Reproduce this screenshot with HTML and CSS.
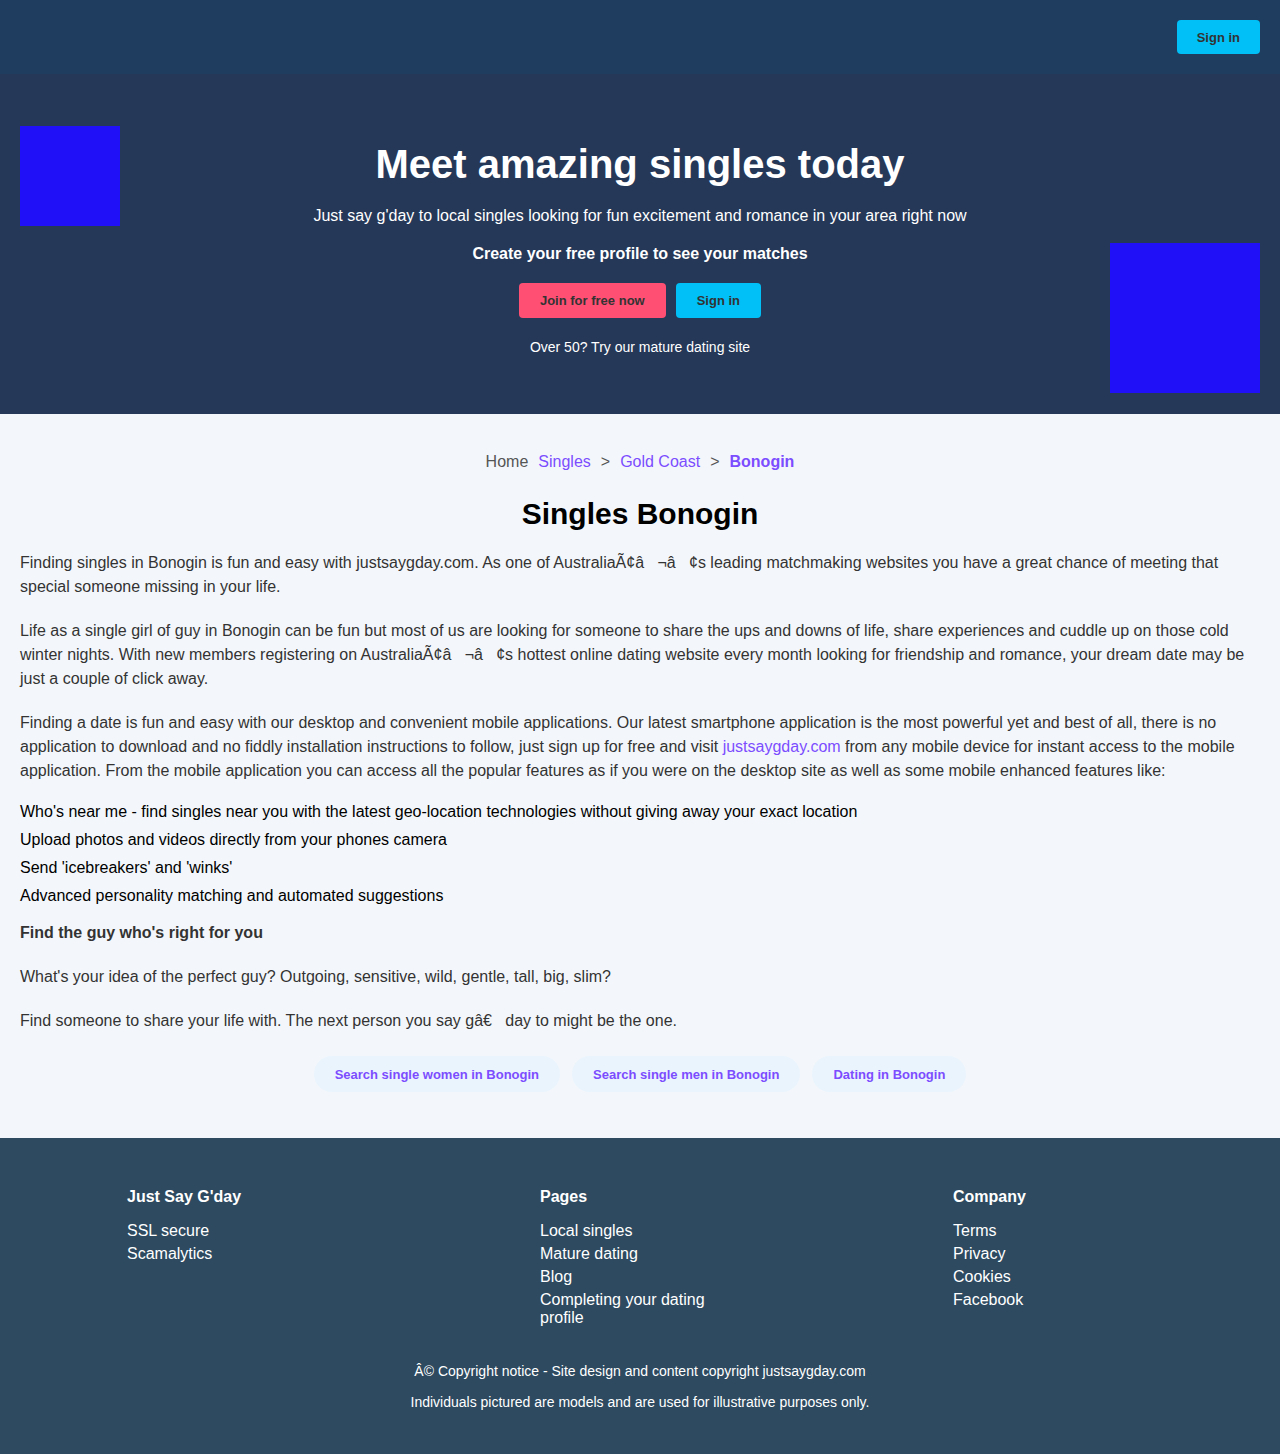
FILE: index.html
```html
<!DOCTYPE html>
<html lang="en">
<head>
<meta charset="utf-8">
<title>Singles Bonogin</title>
<link rel="stylesheet" href="styles.css">
</head>
<body>
<header class="topbar">
  <a class="btn btn-blue" href="#">Sign in</a>
</header>

<section class="hero">
  <div class="hero-img hero-img-left"></div>
  <div class="hero-center">
    <h1 class="hero-title">Meet amazing singles today</h1>
    <p class="hero-sub">Just say g'day to local singles looking for fun excitement and romance in your area right now</p>
    <p class="hero-cta">Create your free profile to see your matches</p>
    <div class="hero-buttons">
      <a class="btn btn-pink" href="#">Join for free now</a>
      <a class="btn btn-blue" href="#">Sign in</a>
    </div>
    <p class="hero-mature">Over 50? Try our mature dating site</p>
  </div>
  <div class="hero-img hero-img-right"></div>
</section>

<main class="content">
  <nav class="crumbs">
    <span class="crumb-home">Home</span>
    <a class="crumb-link" href="#">Singles</a>
    <span class="crumb-sep">&gt;</span>
    <a class="crumb-link" href="#">Gold Coast</a>
    <span class="crumb-sep">&gt;</span>
    <a class="crumb-link crumb-current" href="#">Bonogin</a>
  </nav>
  <h2 class="page-title">Singles Bonogin</h2>
  <p class="para">Finding singles in Bonogin is fun and easy with justsaygday.com. As one of AustraliaÃ¢â&nbsp;&nbsp;&nbsp;¬â&nbsp;&nbsp;&nbsp;¢s leading matchmaking websites you have a great chance of meeting that special someone missing in your life.</p>
  <p class="para">Life as a single girl of guy in Bonogin can be fun but most of us are looking for someone to share the ups and downs of life, share experiences and cuddle up on those cold winter nights. With new members registering on AustraliaÃ¢â&nbsp;&nbsp;&nbsp;¬â&nbsp;&nbsp;&nbsp;¢s hottest online dating website every month looking for friendship and romance, your dream date may be just a couple of click away.</p>
  <p class="para para-tight">Finding a date is fun and easy with our desktop and convenient mobile applications. Our latest smartphone application is the most powerful yet and best of all, there is no application to download and no fiddly installation instructions to follow, just sign up for free and visit <a class="inline-link" href="#">justsaygday.com</a> from any mobile device for instant access to the mobile application. From the mobile application you can access all the popular features as if you were on the desktop site as well as some mobile enhanced features like:</p>
  <ul class="features">
    <li>Who's near me - find singles near you with the latest geo-location technologies without giving away your exact location</li>
    <li>Upload photos and videos directly from your phones camera</li>
    <li>Send 'icebreakers' and 'winks'</li>
    <li>Advanced personality matching and automated suggestions</li>
  </ul>
  <h3 class="subhead">Find the guy who's right for you</h3>
  <p class="para">What's your idea of the perfect guy? Outgoing, sensitive, wild, gentle, tall, big, slim?</p>
  <p class="para">Find someone to share your life with. The next person you say gâ€&nbsp;&nbsp;&nbsp;day to might be the one.</p>
  <div class="pills">
    <a class="pill" href="#">Search single women in Bonogin</a>
    <a class="pill" href="#">Search single men in Bonogin</a>
    <a class="pill" href="#">Dating in Bonogin</a>
  </div>
</main>

<footer class="footer">
  <div class="footer-cols">
    <div class="footer-col">
      <h4 class="footer-head">Just Say G'day</h4>
      <ul class="footer-list">
        <li>SSL secure</li>
        <li>Scamalytics</li>
      </ul>
    </div>
    <div class="footer-col">
      <h4 class="footer-head">Pages</h4>
      <ul class="footer-list">
        <li>Local singles</li>
        <li>Mature dating</li>
        <li>Blog</li>
        <li>Completing your dating profile</li>
      </ul>
    </div>
    <div class="footer-col">
      <h4 class="footer-head">Company</h4>
      <ul class="footer-list">
        <li>Terms</li>
        <li>Privacy</li>
        <li>Cookies</li>
        <li>Facebook</li>
      </ul>
    </div>
  </div>
  <p class="footer-note footer-note-first">Â© Copyright notice - Site design and content copyright justsaygday.com</p>
  <p class="footer-note">Individuals pictured are models and are used for illustrative purposes only.</p>
</footer>
</body>
</html>
```

FILE: styles.css
```css
* { box-sizing: border-box; }

body {
  margin: 0;
  font-family: "Liberation Sans", Arial, Helvetica, sans-serif;
  background: #f3f7fb;
  color: #333;
}

a { text-decoration: none; }

.topbar {
  height: 74px;
  background: #1e3d5f;
  display: flex;
  justify-content: flex-end;
  align-items: center;
  padding: 0 20px;
}

.btn {
  display: inline-flex;
  align-items: center;
  justify-content: center;
  padding: 0 21px;
  border-radius: 4px;
  font-size: 13px;
  font-weight: bold;
  color: #333;
  height: 35px;
}

.topbar .btn { height: 34px; padding: 0 20px; }

.btn-blue { background: #00c0f7; }
.btn-pink { background: #ff5073; }

.hero {
  background: #253858;
  display: grid;
  grid-template-columns: 1fr auto 1fr;
  padding: 52px 20px 21px;
  color: #fff;
}

.hero-img { background: #1f10f8; }
.hero-img-left { width: 100px; height: 100px; justify-self: start; align-self: start; }
.hero-img-right { width: 150px; height: 150px; justify-self: end; align-self: start; margin-top: 117px; }

.hero-center {
  text-align: center;
  padding-top: 15px;
}

.hero-title {
  margin: 0;
  font-size: 40px;
  line-height: 46px;
  font-weight: bold;
}

.hero-sub {
  margin: 19px 0 0;
  font-size: 16px;
  line-height: 20px;
}

.hero-cta {
  margin: 18px 0 0;
  font-size: 16px;
  line-height: 20px;
  font-weight: bold;
}

.hero-buttons {
  margin-top: 19px;
  display: flex;
  justify-content: center;
  gap: 10px;
}

.hero-mature {
  margin: 20px 0 0;
  font-size: 14px;
  line-height: 18px;
}

.content {
  padding: 36px 20px 46px;
}

.crumbs {
  display: flex;
  justify-content: center;
  gap: 10px;
  font-size: 16px;
  line-height: 24px;
}

.crumb-home, .crumb-sep { color: #555; }
.crumb-link { color: #7c4dff; }
.crumb-current { font-weight: bold; }

.page-title {
  margin: 22px 0 19px;
  text-align: center;
  font-size: 30px;
  line-height: 36px;
  color: #000;
}

.para {
  margin: 0 0 20px;
  font-size: 16px;
  line-height: 24px;
}

.para-tight { margin-bottom: 17px; }

.inline-link { color: #7c4dff; }

.features {
  list-style: none;
  margin: 0 0 13px;
  padding: 0;
  color: #000;
  font-size: 16px;
  line-height: 24px;
}

.features li { margin-bottom: 4px; }

.subhead {
  margin: 0 0 20px;
  font-size: 16px;
  line-height: 24px;
  font-weight: bold;
}

.pills {
  display: flex;
  justify-content: center;
  gap: 12px;
  margin-top: 23px;
}

.pill {
  display: inline-flex;
  align-items: center;
  height: 36px;
  padding: 0 21px;
  border-radius: 18px;
  background: #eaf4fd;
  color: #7c4dff;
  font-size: 13px;
  font-weight: bold;
}

.footer {
  background: #2d4a60;
  color: #fff;
  padding: 49px 20px 42px;
}

.footer-cols {
  max-width: 1026px;
  margin: 0 auto;
  display: flex;
  justify-content: space-between;
}

.footer-col { width: 200px; }

.footer-head {
  margin: 0 0 15px;
  font-size: 16px;
  line-height: 20px;
  font-weight: bold;
}

.footer-list {
  list-style: none;
  margin: 0;
  padding: 0;
  font-size: 16px;
  line-height: 18px;
}

.footer-list li { margin-bottom: 5px; }

.footer-note {
  margin: 11px 0 0;
  text-align: center;
  font-size: 14px;
  line-height: 20px;
}

.footer-note-first { margin-top: 29px; }
```
